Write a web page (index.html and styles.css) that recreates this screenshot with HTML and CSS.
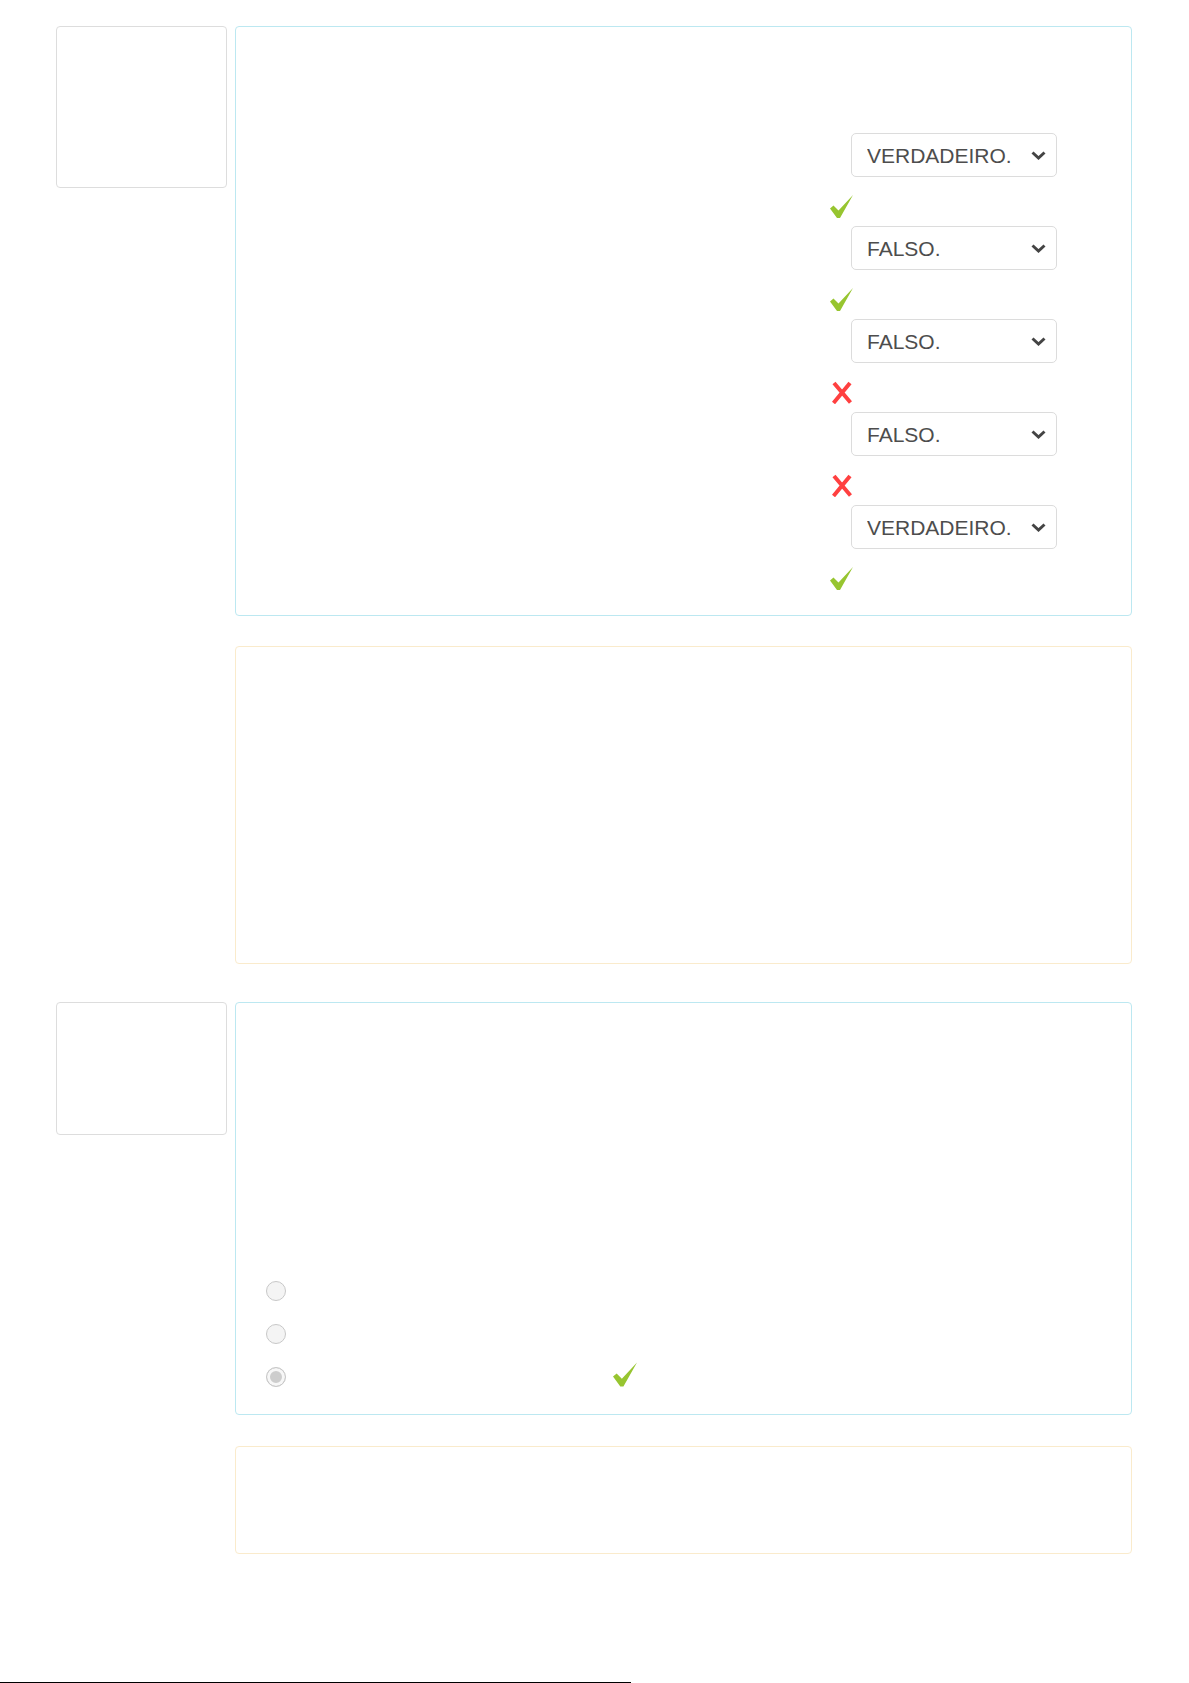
FILE: index.html
```html
<!DOCTYPE html>
<html lang="pt">

<head>
    <meta charset="UTF-8">
    <meta name="viewport" content="width=device-width, initial-scale=1.0">
    <title>Questionário - revisão</title>
    <link rel="stylesheet" href="styles.css">
</head>

<body>
    <div class="page">

        <!-- Question 1: true / false matching -->
        <div class="question">
            <div class="info-box info-tall"></div>
            <div class="question-body">
                <div class="panel panel-info panel-match">
                    <div class="answer">
                        <div class="select-wrap">
                            <select class="answer-select">
                                <option selected>VERDADEIRO.</option>
                                <option>FALSO.</option>
                            </select>
                            <svg class="chevron" viewBox="0 0 15 9"><polyline points="1.5,1.5 7.5,7 13.5,1.5" /></svg>
                        </div>
                        <svg class="mark mark-ok" viewBox="0 0 23 23"><polygon points="0,13.5 3.5,10.5 8.5,15.5 23,0 10,23 7,23" /></svg>
                    </div>
                    <div class="answer">
                        <div class="select-wrap">
                            <select class="answer-select">
                                <option>VERDADEIRO.</option>
                                <option selected>FALSO.</option>
                            </select>
                            <svg class="chevron" viewBox="0 0 15 9"><polyline points="1.5,1.5 7.5,7 13.5,1.5" /></svg>
                        </div>
                        <svg class="mark mark-ok" viewBox="0 0 23 23"><polygon points="0,13.5 3.5,10.5 8.5,15.5 23,0 10,23 7,23" /></svg>
                    </div>
                    <div class="answer">
                        <div class="select-wrap">
                            <select class="answer-select">
                                <option>VERDADEIRO.</option>
                                <option selected>FALSO.</option>
                            </select>
                            <svg class="chevron" viewBox="0 0 15 9"><polyline points="1.5,1.5 7.5,7 13.5,1.5" /></svg>
                        </div>
                        <svg class="mark mark-wrong" viewBox="0 0 20 23"><path d="M2 2 L18.5 21.5 M18 2 L1.5 22" /></svg>
                    </div>
                    <div class="answer">
                        <div class="select-wrap">
                            <select class="answer-select">
                                <option>VERDADEIRO.</option>
                                <option selected>FALSO.</option>
                            </select>
                            <svg class="chevron" viewBox="0 0 15 9"><polyline points="1.5,1.5 7.5,7 13.5,1.5" /></svg>
                        </div>
                        <svg class="mark mark-wrong" viewBox="0 0 20 23"><path d="M2 2 L18.5 21.5 M18 2 L1.5 22" /></svg>
                    </div>
                    <div class="answer">
                        <div class="select-wrap">
                            <select class="answer-select">
                                <option selected>VERDADEIRO.</option>
                                <option>FALSO.</option>
                            </select>
                            <svg class="chevron" viewBox="0 0 15 9"><polyline points="1.5,1.5 7.5,7 13.5,1.5" /></svg>
                        </div>
                        <svg class="mark mark-ok" viewBox="0 0 23 23"><polygon points="0,13.5 3.5,10.5 8.5,15.5 23,0 10,23 7,23" /></svg>
                    </div>
                </div>

                <!-- Feedback -->
                <div class="panel panel-warning feedback-tall"></div>
            </div>
        </div>

        <!-- Question 2: multiple choice -->
        <div class="question question-next">
            <div class="info-box info-short"></div>
            <div class="question-body">
                <div class="panel panel-info panel-choice">
                    <label class="choice">
                        <input type="radio" name="q2" disabled>
                    </label>
                    <label class="choice">
                        <input type="radio" name="q2" disabled>
                    </label>
                    <label class="choice">
                        <input type="radio" name="q2" checked disabled>
                        <span class="choice-text"></span>
                        <svg class="mark mark-ok mark-choice" viewBox="0 0 23 23"><polygon points="0,13.5 3.5,10.5 8.5,15.5 23,0 10,23 7,23" /></svg>
                    </label>
                </div>

                <!-- Feedback -->
                <div class="panel panel-warning feedback-short"></div>
            </div>
        </div>

        <div class="page-end"></div>
    </div>
</body>

</html>
```

FILE: styles.css
```css
/* Page */
body {
    margin: 0;
    font-family: 'Liberation Sans', Arial, sans-serif;
    background-color: #ffffff;
    color: #333;
}

.page {
    padding: 26px 0 0 56px;
}

/* One question: info box on the left, content on the right */
.question {
    display: flex;
    align-items: flex-start;
    gap: 8px;
}

.question-next {
    margin-top: 38px;
}

.info-box {
    box-sizing: border-box;
    width: 171px;
    border: 1px solid #dddddd;
    border-radius: 4px;
}

.info-tall {
    height: 162px;
}

.info-short {
    height: 133px;
}

.question-body {
    width: 897px;
}

/* Panels */
.panel {
    box-sizing: border-box;
    border: 1px solid transparent;
    border-radius: 4px;
}

.panel-info {
    border-color: #bce8f1;
}

.panel-warning {
    border-color: #faebcc;
}

.feedback-tall {
    margin-top: 30px;
    height: 318px;
}

.feedback-short {
    margin-top: 31px;
    height: 108px;
}

/* Matching answers */
.panel-match {
    height: 590px;
    padding: 106px 0 0 594px;
}

.answer {
    display: flex;
    flex-direction: column;
    align-items: flex-start;
    margin-bottom: 8px;
}

.select-wrap {
    position: relative;
    margin-left: 21px;
    margin-bottom: 18px;
}

.answer-select {
    appearance: none;
    -webkit-appearance: none;
    box-sizing: border-box;
    width: 206px;
    height: 44px;
    padding: 0 36px 0 15px;
    font-family: 'Liberation Sans', Arial, sans-serif;
    font-size: 21px;
    color: #4d4d4d;
    background-color: #ffffff;
    border: 1px solid #dcdcdc;
    border-radius: 5px;
}

.chevron {
    position: absolute;
    right: 11px;
    top: 18px;
    width: 15px;
    height: 9px;
    pointer-events: none;
}

.chevron polyline {
    fill: none;
    stroke: #444444;
    stroke-width: 3;
}

/* Right / wrong marks */
.mark {
    display: block;
    width: 23px;
    height: 23px;
}

.mark-ok polygon {
    fill: #97c530;
}

.mark-wrong {
    width: 20px;
    margin-left: 2px;
}

.mark-wrong path {
    fill: none;
    stroke: #ff4040;
    stroke-width: 4;
}

/* Multiple choice */
.panel-choice {
    height: 413px;
    padding: 266px 0 0 30px;
}

.choice {
    display: flex;
    align-items: center;
    height: 43px;
}

.choice input {
    appearance: none;
    -webkit-appearance: none;
    box-sizing: border-box;
    width: 20px;
    height: 20px;
    margin: 0;
    border: 1.5px solid #c8c8c8;
    border-radius: 50%;
    background-color: #f4f4f4;
}

.choice input:checked {
    background-color: #cdcdcd;
    box-shadow: inset 0 0 0 3px #f7f7f7;
}

.choice-text {
    width: 327px;
}

.mark-choice {
    width: 24px;
    height: 25px;
    margin-top: -5px;
}

/* Thin rule at the very bottom of the page */
.page-end {
    width: 631px;
    height: 1px;
    margin: 128px 0 0 -56px;
    background-color: #000000;
}
```
